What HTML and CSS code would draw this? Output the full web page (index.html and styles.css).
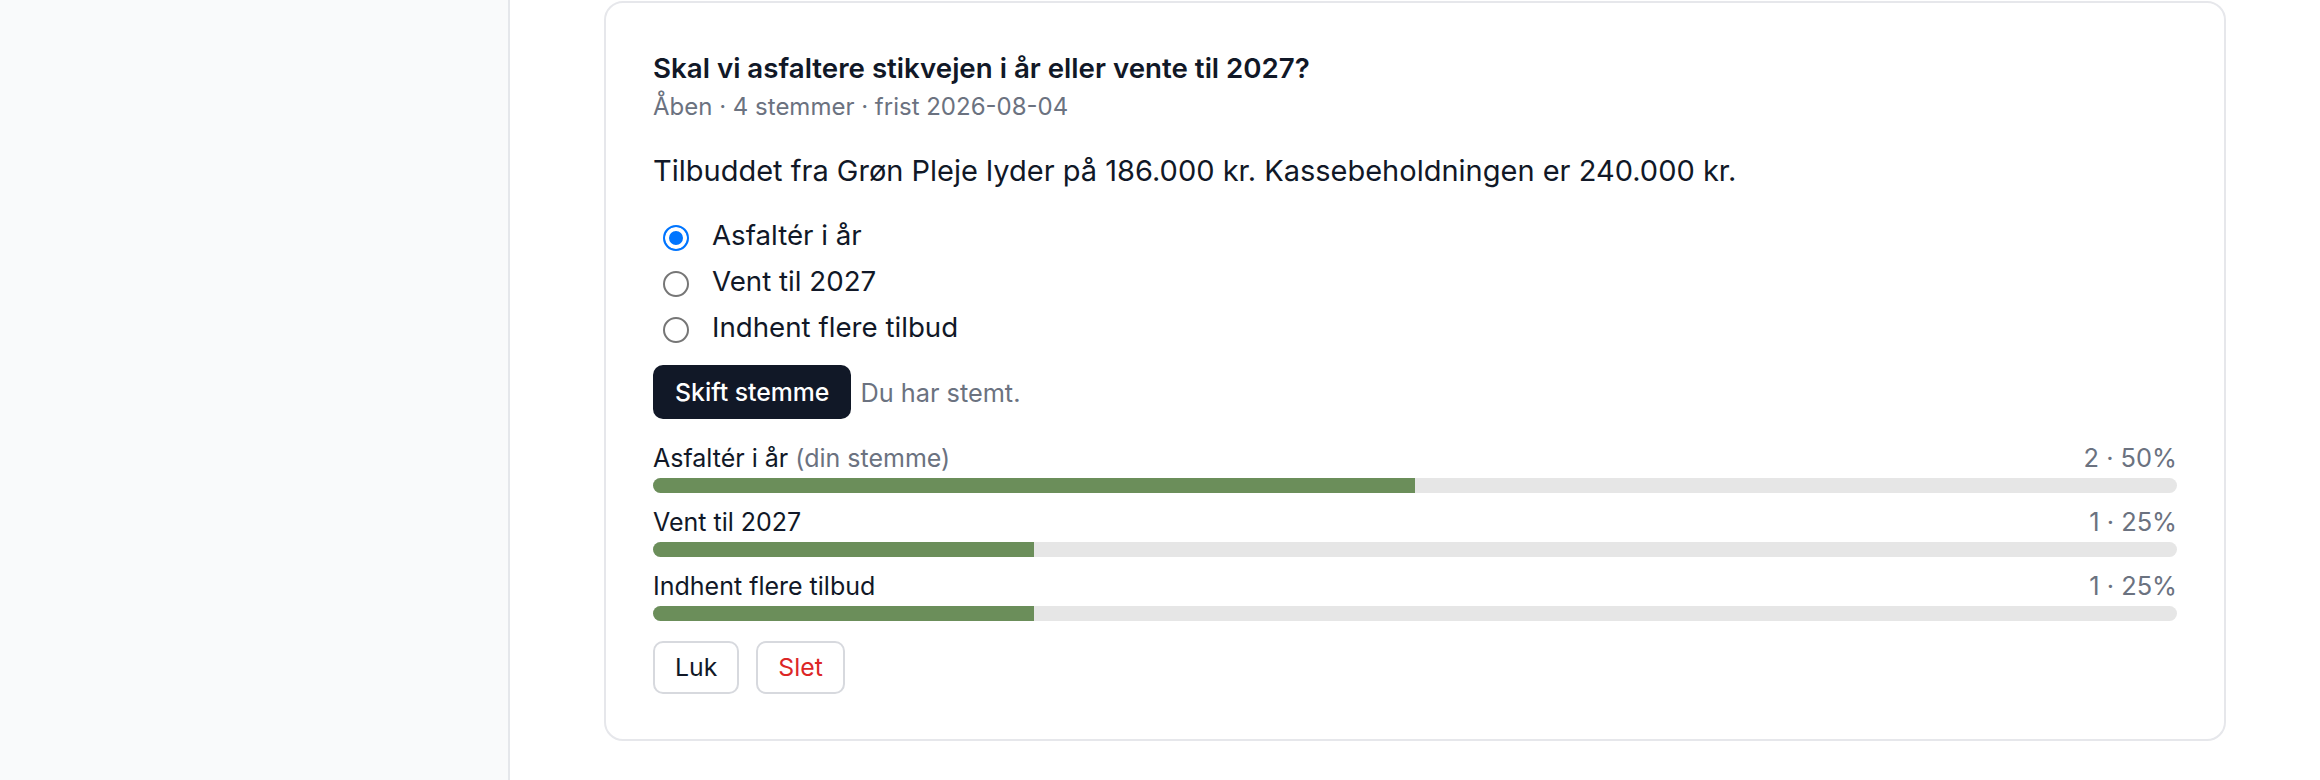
FILE: index.html
```html
<!DOCTYPE html>
<html lang="da">
<head>
<meta charset="utf-8">
<title>Afstemning</title>
<link rel="stylesheet" href="styles.css">
</head>
<body>
<div class="layout">
  <aside class="sidebar"></aside>
  <main class="main">
    <section class="card">
      <h2 class="title">Skal vi asfaltere stikvejen i år eller vente til 2027?</h2>
      <p class="meta">Åben · 4 stemmer · frist 2026-08-04</p>
      <p class="desc">Tilbuddet fra Grøn Pleje lyder på 186.000 kr. Kassebeholdningen er 240.000 kr.</p>
      <div class="options">
        <label class="option"><input type="radio" name="vote" checked><span>Asfaltér i år</span></label>
        <label class="option"><input type="radio" name="vote"><span>Vent til 2027</span></label>
        <label class="option"><input type="radio" name="vote"><span>Indhent flere tilbud</span></label>
      </div>
      <div class="vote-row">
        <button class="btn-primary" type="button">Skift stemme</button>
        <span class="voted">Du har stemt.</span>
      </div>
      <div class="results">
        <div class="result">
          <div class="result-head"><span class="result-label">Asfaltér i år <span class="mine">(din stemme)</span></span><span class="result-count">2 · 50%</span></div>
          <div class="track"><div class="fill" style="width:50%"></div></div>
        </div>
        <div class="result">
          <div class="result-head"><span class="result-label">Vent til 2027</span><span class="result-count">1 · 25%</span></div>
          <div class="track"><div class="fill" style="width:25%"></div></div>
        </div>
        <div class="result">
          <div class="result-head"><span class="result-label">Indhent flere tilbud</span><span class="result-count">1 · 25%</span></div>
          <div class="track"><div class="fill" style="width:25%"></div></div>
        </div>
      </div>
      <div class="actions">
        <button class="btn-outline" type="button">Luk</button>
        <button class="btn-outline danger" type="button">Slet</button>
      </div>
    </section>
  </main>
</div>
</body>
</html>
```
FILE: styles.css
```css
* { box-sizing: border-box; }
html, body { margin: 0; padding: 0; }
body {
  font-family: Inter, "Noto Sans", "Liberation Sans", sans-serif;
  color: #111827;
  background: #ffffff;
  overflow: hidden;
}
.layout {
  display: flex;
  height: 780px;
}
.sidebar {
  width: 510px;
  flex: none;
  background: #f9fafb;
  border-right: 2px solid #e5e7eb;
}
.main {
  flex: 1;
  padding: 1px 94px 0 94px;
}
.card {
  border: 2px solid #e6e7eb;
  border-radius: 19px;
  background: #fff;
  padding: 47px 47px 45px 47px;
}
.title {
  margin: 0;
  font-size: 27.7px;
  line-height: 36px;
  font-weight: 600;
  color: #111827;
}
.meta {
  margin: 6px 0 0 0;
  font-size: 24px;
  line-height: 30px;
  color: #6b7280;
}
.desc {
  margin: 29px 0 0 0;
  font-size: 29px;
  line-height: 40px;
  color: #111827;
}
.options {
  margin-top: 21px;
  display: flex;
  flex-direction: column;
}
.option {
  display: flex;
  align-items: center;
  height: 46px;
  font-size: 27.7px;
}
.option input {
  appearance: none;
  -webkit-appearance: none;
  width: 26px;
  height: 26px;
  margin: 6px 23px 0 10px;
  flex: none;
  border: 2px solid #767676;
  border-radius: 50%;
  background: #fff;
}
.option input:checked {
  border: 2.5px solid #0075ff;
  background: #0075ff;
  box-shadow: inset 0 0 0 4px #fff;
}
.vote-row {
  margin-top: 15px;
  display: flex;
  align-items: center;
  gap: 9px;
}
.btn-primary {
  font-family: inherit;
  font-size: 24.8px;
  font-weight: 500;
  line-height: 29px;
  color: #fff;
  background: #111827;
  border: none;
  border-radius: 10px;
  height: 54px;
  padding: 0 22px;
}
.voted {
  font-size: 25.3px;
  color: #6b7280;
}
.results {
  margin-top: 24px;
  display: flex;
  flex-direction: column;
  gap: 14px;
}
.result-head {
  display: flex;
  justify-content: space-between;
  font-size: 25px;
  line-height: 30px;
}
.mine, .result-count { color: #6b7280; }
.result-count { font-size: 25.4px; }
.track {
  margin-top: 5px;
  height: 15px;
  border-radius: 8px;
  background: #e6e6e6;
  overflow: hidden;
}
.fill {
  height: 100%;
  background: #6b8e5a;
}
.actions {
  margin-top: 20px;
  display: flex;
  gap: 17px;
}
.btn-outline {
  font-family: inherit;
  font-size: 24.8px;
  line-height: 29px;
  color: #111827;
  background: #fff;
  border: 2px solid #d7d9de;
  border-radius: 10px;
  height: 53px;
  padding: 0 20px;
}
.btn-outline.danger { color: #dc2626; }
```
